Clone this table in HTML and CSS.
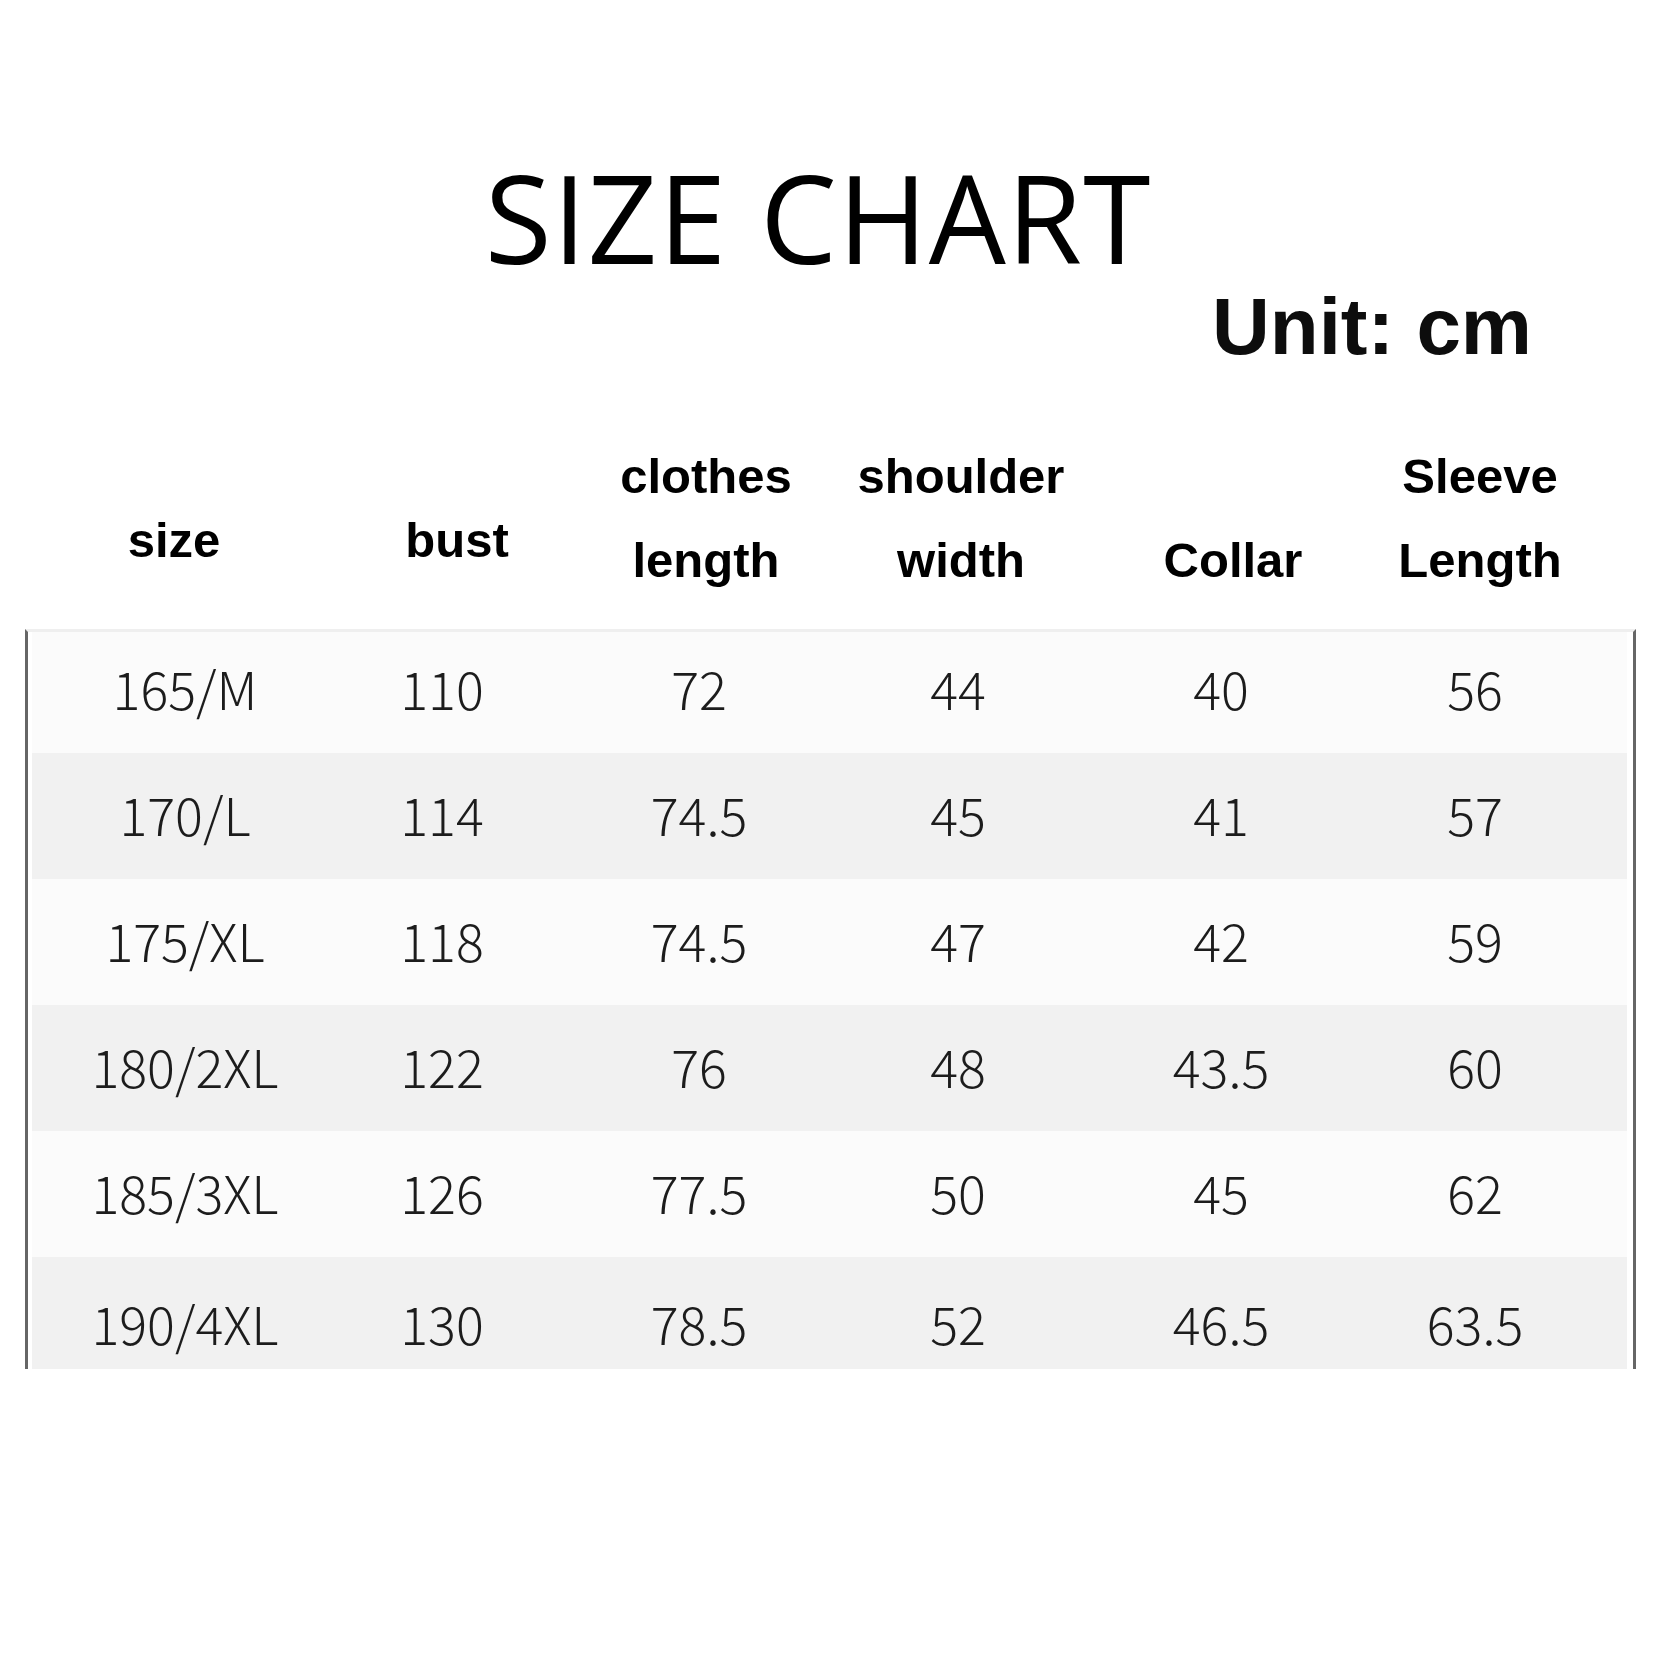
FILE: index.html
```html
<!DOCTYPE html>
<html lang="en">
<head>
<meta charset="utf-8">
<title>Size Chart</title>
<link rel="stylesheet" href="styles.css">
</head>
<body>
<main class="page">
  <h1 class="title">SIZE CHART</h1>
  <p class="unit">Unit: cm</p>
  <section class="chart">
    <div class="head">
      <div class="hcell mid">size</div>
      <div class="hcell mid">bust</div>
      <div class="hcell">clothes<br>length</div>
      <div class="hcell">shoulder<br>width</div>
      <div class="hcell low">Collar</div>
      <div class="hcell">Sleeve<br>Length</div>
    </div>
    <div class="table">
      <div class="row light">
        <span>165/M</span><span>110</span><span>72</span><span>44</span><span>40</span><span>56</span>
      </div>
      <div class="row dark">
        <span>170/L</span><span>114</span><span>74.5</span><span>45</span><span>41</span><span>57</span>
      </div>
      <div class="row light">
        <span>175/XL</span><span>118</span><span>74.5</span><span>47</span><span>42</span><span>59</span>
      </div>
      <div class="row dark">
        <span>180/2XL</span><span>122</span><span>76</span><span>48</span><span>43.5</span><span>60</span>
      </div>
      <div class="row light">
        <span>185/3XL</span><span>126</span><span>77.5</span><span>50</span><span>45</span><span>62</span>
      </div>
      <div class="row dark">
        <span>190/4XL</span><span>130</span><span>78.5</span><span>52</span><span>46.5</span><span>63.5</span>
      </div>
    </div>
  </section>
</main>
</body>
</html>
```

FILE: styles.css
```css
html, body {
  margin: 0;
  padding: 0;
  background: #ffffff;
}

.page {
  width: 1656px;
  height: 1656px;
  overflow: hidden;
}

.title {
  margin: 156px 20px 0 0;
  font-family: "Open Sans", "Liberation Sans", sans-serif;
  font-weight: 400;
  font-size: 122px;
  line-height: 122px;
  color: #000;
  text-align: center;
  letter-spacing: 1px;
}

.unit {
  margin: 9px 124px 0 0;
  font-family: "Liberation Sans", Arial, sans-serif;
  font-weight: 700;
  font-size: 80px;
  line-height: 80px;
  color: #0d0d0d;
  text-align: right;
}

.head {
  margin: 67px 0 0 32px;
  display: grid;
  grid-template-columns: 284px 282px 216px 294px 250px 244px;
  height: 168px;
  font-family: "Liberation Sans", Arial, sans-serif;
  font-weight: 700;
  font-size: 49px;
  line-height: 84px;
  color: #000;
  text-align: center;
}

.hcell.mid {
  padding-top: 64px;
}

.hcell.low {
  padding-top: 84px;
}

.table {
  margin: 27px 0 0 25px;
  height: 737px;
  overflow: hidden;
  border-top: 3px solid #efefef;
  border-left: 3px solid #666;
  border-right: 3px solid #666;
  padding: 0 6px 0 4px;
  box-sizing: content-box;
  width: 1595px;
}

.row {
  display: grid;
  grid-template-columns: 258px 256px 258px 260px 266px 242px;
  align-items: end;
  padding-left: 24px;
  height: 126px;
  font-family: "Noto Sans CJK SC", "Noto Sans", sans-serif;
  font-weight: 300;
  font-size: 52px;
  color: #1c1c1c;
  text-align: center;
}

.row:first-child {
  height: 121px;
}

.row:last-child {
  height: 131px;
}

.row span {
  line-height: 75px;
  padding-bottom: 28px;
}

.row.light {
  background: #fbfbfb;
}

.row.dark {
  background: #f1f1f1;
}
```
